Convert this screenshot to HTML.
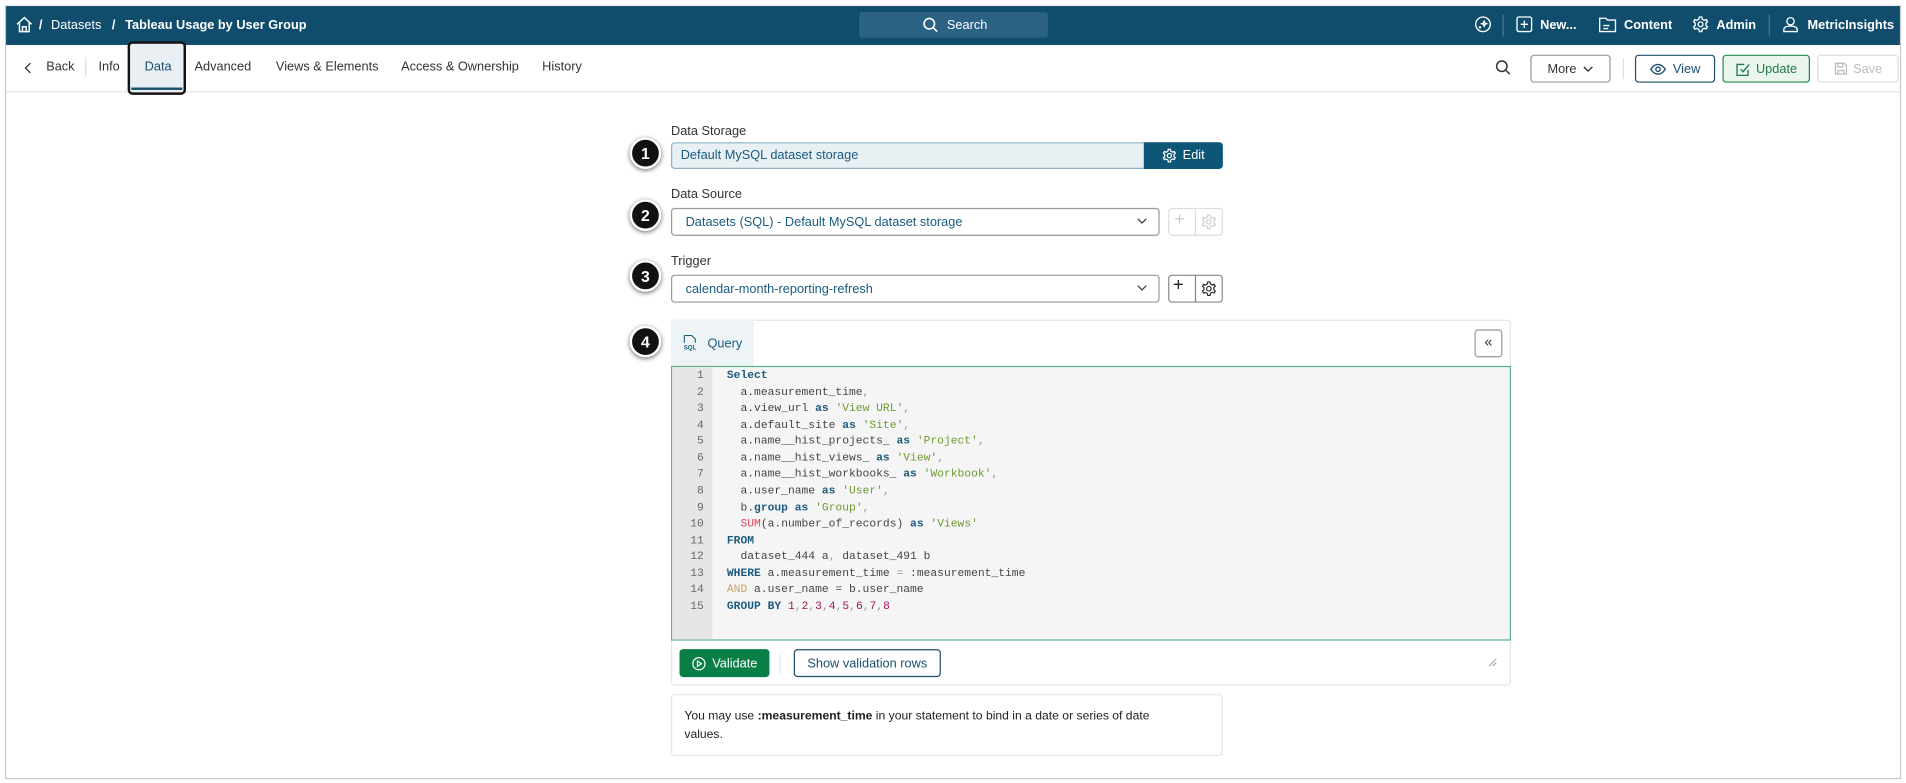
<!DOCTYPE html>
<html><head><meta charset="utf-8">
<style>
*{box-sizing:border-box;margin:0;padding:0}
html,body{width:1906px;height:782px;overflow:hidden;background:#fff}
#w{position:absolute;left:0;top:0;width:1568px;height:644px;transform:scale(1.21556);transform-origin:0 0;font-family:"Liberation Sans",sans-serif;color:#222}
.a{position:absolute}
.frame{left:4px;top:4px;width:1560px;height:637px;border:1px solid #c8c8c8;border-top-color:#e4e4e4}
.bar{left:5px;top:5px;width:1558px;height:32px;background:#104d6d;color:#fff;font-size:10.5px;font-weight:bold}
.bar .a{top:10px;white-space:nowrap}
.tab{top:49px;font-size:10.5px;color:#333;white-space:nowrap}
.btn{border:1px solid #999;border-radius:3px;font-size:10.5px;display:flex;align-items:center;justify-content:center;gap:5px;background:#fff}
.lbl{font-size:10.5px;color:#333}
.inp{border:1px solid #999;border-radius:3px;font-size:10.5px;color:#1a5b80;padding-left:11px;display:flex;align-items:center;background:#fff}
.circ{width:26px;height:26px;border-radius:50%;background:#111;border:2px solid #fff;box-shadow:0 1px 4px rgba(0,0,0,.6);color:#fff;font-weight:bold;font-size:13px;display:flex;align-items:center;justify-content:center}
.code{font-family:"Liberation Mono","DejaVu Sans Mono",monospace;font-size:9.3px;line-height:13.57px;white-space:pre}
.k{color:#1d5a7d;font-weight:bold}.s{color:#6e9a33}.f{color:#e0445f}.n{color:#a3145c}.p{color:#999}
</style></head><body><div id="w">
<div class="a frame"></div>
<div class="a bar">
 <svg class="a" style="left:8px;top:8px" width="14" height="14" viewBox="0 0 14 14" fill="none" stroke="#fff" stroke-width="1.2"><path d="M1 7 7 1.5 13 7M3 5.5V13h8V5.5M5.5 13V9h3v4"/></svg>
 <span class="a" style="left:27px">/</span><span class="a" style="left:37px;font-weight:normal">Datasets</span>
 <span class="a" style="left:87px">/</span><span class="a" style="left:98px">Tableau Usage by User Group</span>
 <div class="a" style="left:702px;top:5px;width:155px;height:21px;background:#2b6283;border-radius:2px"></div>
 <svg class="a" style="left:754px;top:9px" width="13" height="13" viewBox="0 0 13 13" fill="none" stroke="#fff" stroke-width="1.3"><circle cx="5.5" cy="5.5" r="4.3"/><path d="M8.7 8.7 12 12"/></svg>
 <span class="a" style="left:774px;font-weight:normal">Search</span>
 <svg class="a" style="left:1208px;top:8px" width="14" height="14" viewBox="0 0 14 14" fill="none" stroke="#fff" stroke-width="1.1"><circle cx="7" cy="7" r="6"/><path d="M8 4.5l.6 1.4 1.4.6-1.4.6L8 8.5l-.6-1.4L6 6.5l1.4-.6zM4.5 8.5v2M3.5 9.5h2"/></svg>
 <div class="a" style="left:1231px;top:7px;width:1px;height:18px;background:#4a7a96"></div>
 <svg class="a" style="left:1242px;top:8px" width="14" height="14" viewBox="0 0 14 14" fill="none" stroke="#fff" stroke-width="1.1"><rect x="1" y="1" width="12" height="12" rx="1.5"/><path d="M7 4v6M4 7h6"/></svg>
 <span class="a" style="left:1262px">New...</span>
 <svg class="a" style="left:1310px;top:8px" width="15" height="14" viewBox="0 0 15 14" fill="none" stroke="#fff" stroke-width="1.1"><path d="M1 2h5l1.5 1.5H14V13H1z M4 8h5M4 10.5h4"/></svg>
 <span class="a" style="left:1331px">Content</span>
 <svg class="a" style="left:1387px;top:8px" width="14" height="14" viewBox="0 0 14 14" fill="none" stroke="#fff" stroke-width="1.1"><circle cx="7" cy="7" r="2"/><path d="M6 1h2l.4 1.8 1.6.9 1.7-.6 1 1.7-1.3 1.2v1.9l1.3 1.2-1 1.7-1.7-.6-1.6.9L8 13H6l-.4-1.8-1.6-.9-1.7.6-1-1.7L2.6 8V6L1.3 4.8l1-1.7 1.7.6 1.6-.9z"/></svg>
 <span class="a" style="left:1407px">Admin</span>
 <div class="a" style="left:1450px;top:7px;width:1px;height:18px;background:#4a7a96"></div>
 <svg class="a" style="left:1461px;top:8px" width="14" height="14" viewBox="0 0 14 14" fill="none" stroke="#fff" stroke-width="1.1"><circle cx="7" cy="4.5" r="3"/><path d="M1.5 13v-1.5c0-2 2-3 5.5-3s5.5 1 5.5 3V13z"/></svg>
 <span class="a" style="left:1482px">MetricInsights</span>
</div>
<div class="a" style="left:5px;top:75px;width:1558px;height:1px;background:#e3e3e3"></div>
<svg class="a" style="left:19px;top:51px" width="8" height="10" viewBox="0 0 8 10" fill="none" stroke="#333" stroke-width="1.1"><path d="M6 1 2 5l4 4"/></svg>
<span class="a tab" style="left:38px">Back</span>
<div class="a" style="left:70px;top:47px;width:1px;height:16px;background:#ddd"></div>
<span class="a tab" style="left:81px">Info</span>
<div class="a" style="left:105px;top:34px;width:48px;height:44px;border:2px solid #111;border-radius:4px;background:#e9eff3"></div>
<div class="a" style="left:108px;top:72px;width:42px;height:2px;background:#1a4f6e"></div>
<span class="a tab" style="left:119px;color:#1a4f6e">Data</span>
<span class="a tab" style="left:160px">Advanced</span>
<span class="a tab" style="left:227px">Views &amp; Elements</span>
<span class="a tab" style="left:330px">Access &amp; Ownership</span>
<span class="a tab" style="left:446px">History</span>
<svg class="a" style="left:1230px;top:49px" width="13" height="13" viewBox="0 0 13 13" fill="none" stroke="#333" stroke-width="1.2"><circle cx="5.5" cy="5.5" r="4.3"/><path d="M8.7 8.7 12 12"/></svg>
<div class="a btn" style="left:1259px;top:45px;width:66px;height:23px;color:#333">More <svg width="9" height="6" viewBox="0 0 9 6" fill="none" stroke="#333" stroke-width="1.1"><path d="M1 1l3.5 3.5L8 1"/></svg></div>
<div class="a" style="left:1335px;top:48px;width:1px;height:17px;background:#e0e0e0"></div>
<div class="a btn" style="left:1345px;top:45px;width:66px;height:23px;border-color:#1a4f6e;color:#1a4f6e"><svg width="14" height="10" viewBox="0 0 14 10" fill="none" stroke="#1a4f6e" stroke-width="1.1"><path d="M1 5c2-3 4-4 6-4s4 1 6 4c-2 3-4 4-6 4S3 8 1 5z"/><circle cx="7" cy="5" r="1.8"/></svg>View</div>
<div class="a btn" style="left:1417px;top:45px;width:72px;height:23px;border-color:#1f8a4f;background:#eaf5ee;color:#1f7a46"><svg width="12" height="12" viewBox="0 0 12 12" fill="none" stroke="#1f7a46" stroke-width="1.1"><path d="M10 6.5V11H1V2h6M4 6l2 2 5-6"/></svg>Update</div>
<div class="a btn" style="left:1495px;top:45px;width:67px;height:23px;border-color:#ddd;color:#bbb"><svg width="11" height="11" viewBox="0 0 11 11" fill="none" stroke="#bbb" stroke-width="1"><path d="M1 1h7l2 2v7H1zM3 1v3h4V1M3 10V7h5v3"/></svg>Save</div>
<span class="a lbl" style="left:552px;top:102px">Data Storage</span>
<div class="a inp" style="left:552px;top:117px;width:390px;height:22px;background:#e8f0f4;border-color:#8db0c4;border-radius:3px 0 0 3px;padding-left:7px">Default MySQL dataset storage</div>
<div class="a" style="left:941px;top:117px;width:65px;height:22px;background:#0e5675;border-radius:0 3px 3px 0;color:#fff;font-size:10.5px;display:flex;align-items:center;justify-content:center;gap:5px"><svg width="12" height="12" viewBox="0 0 14 14" fill="none" stroke="#fff" stroke-width="1.2"><circle cx="7" cy="7" r="2"/><path d="M6 1h2l.4 1.8 1.6.9 1.7-.6 1 1.7-1.3 1.2v1.9l1.3 1.2-1 1.7-1.7-.6-1.6.9L8 13H6l-.4-1.8-1.6-.9-1.7.6-1-1.7L2.6 8V6L1.3 4.8l1-1.7 1.7.6 1.6-.9z"/></svg>Edit</div>
<div class="a circ" style="left:518px;top:113px">1</div>
<span class="a lbl" style="left:552px;top:154px">Data Source</span>
<div class="a inp" style="left:552px;top:171px;width:402px;height:23px">Datasets (SQL) - Default MySQL dataset storage</div>
<svg class="a" style="left:935px;top:179px" width="9" height="6" viewBox="0 0 9 6" fill="none" stroke="#333" stroke-width="1"><path d="M1 1l3.5 3.5L8 1"/></svg>
<div class="a" style="left:961px;top:171px;width:45px;height:23px;border:1px solid #ddd;border-radius:3px"></div>
<div class="a" style="left:983px;top:171px;width:1px;height:23px;background:#ddd"></div>
<span class="a" style="left:966px;top:172px;font-size:15px;color:#ccc">+</span>
<svg class="a" style="left:988px;top:176px" width="13" height="13" viewBox="0 0 14 14" fill="none" stroke="#ccc" stroke-width="1"><circle cx="7" cy="7" r="2"/><path d="M6 1h2l.4 1.8 1.6.9 1.7-.6 1 1.7-1.3 1.2v1.9l1.3 1.2-1 1.7-1.7-.6-1.6.9L8 13H6l-.4-1.8-1.6-.9-1.7.6-1-1.7L2.6 8V6L1.3 4.8l1-1.7 1.7.6 1.6-.9z"/></svg>
<div class="a circ" style="left:518px;top:164px">2</div>
<span class="a lbl" style="left:552px;top:209px">Trigger</span>
<div class="a inp" style="left:552px;top:226px;width:402px;height:23px">calendar-month-reporting-refresh</div>
<svg class="a" style="left:935px;top:234px" width="9" height="6" viewBox="0 0 9 6" fill="none" stroke="#333" stroke-width="1"><path d="M1 1l3.5 3.5L8 1"/></svg>
<div class="a" style="left:961px;top:226px;width:45px;height:23px;border:1px solid #888;border-radius:3px"></div>
<div class="a" style="left:983px;top:226px;width:1px;height:23px;background:#888"></div>
<span class="a" style="left:965px;top:226px;font-size:15px;color:#222">+</span>
<svg class="a" style="left:988px;top:231px" width="13" height="13" viewBox="0 0 14 14" fill="none" stroke="#222" stroke-width="1"><circle cx="7" cy="7" r="2"/><path d="M6 1h2l.4 1.8 1.6.9 1.7-.6 1 1.7-1.3 1.2v1.9l1.3 1.2-1 1.7-1.7-.6-1.6.9L8 13H6l-.4-1.8-1.6-.9-1.7.6-1-1.7L2.6 8V6L1.3 4.8l1-1.7 1.7.6 1.6-.9z"/></svg>
<div class="a circ" style="left:518px;top:214px">3</div>
<div class="a" style="left:552px;top:263px;width:691px;height:301px;border:1px solid #e6e6e6;border-radius:3px"></div>
<div class="a" style="left:552px;top:263px;width:68px;height:38px;background:#eef3f6"></div>
<svg class="a" style="left:562px;top:275px" width="12" height="14" viewBox="0 0 12 14" fill="none" stroke="#1a5b80" stroke-width="0.9"><path d="M1 1h6l3 3v3M1 1v6"/><text x="0.5" y="12.5" font-size="5" fill="#1a5b80" stroke="none" font-family="Liberation Sans" font-weight="bold">SQL</text></svg>
<span class="a" style="left:582px;top:277px;font-size:10.5px;color:#1a5b80">Query</span>
<div class="a circ" style="left:518px;top:268px">4</div>
<div class="a" style="left:1213px;top:271px;width:23px;height:23px;border:1px solid #999;border-radius:3px;font-size:12px;text-align:center;line-height:19px;color:#333">«</div>
<div class="a" style="left:552px;top:301px;width:691px;height:226px;border:1px solid #5bb38a;background:#f5f5f5"></div>
<div class="a" style="left:553px;top:302px;width:33px;height:224px;background:#e6e6e6"></div>
<div class="a code" style="left:553px;top:302px;width:26px;text-align:right;color:#666">1
2
3
4
5
6
7
8
9
10
11
12
13
14
15</div>
<div class="a code" style="left:598px;top:302px;color:#444"><span class="k">Select</span>
  a.measurement_time<span class="p">,</span>
  a.view_url <span class="k">as</span> <span class="s">'View URL'</span><span class="p">,</span>
  a.default_site <span class="k">as</span> <span class="s">'Site'</span><span class="p">,</span>
  a.name__hist_projects_ <span class="k">as</span> <span class="s">'Project'</span><span class="p">,</span>
  a.name__hist_views_ <span class="k">as</span> <span class="s">'View'</span><span class="p">,</span>
  a.name__hist_workbooks_ <span class="k">as</span> <span class="s">'Workbook'</span><span class="p">,</span>
  a.user_name <span class="k">as</span> <span class="s">'User'</span><span class="p">,</span>
  b.<span class="k">group</span> <span class="k">as</span> <span class="s">'Group'</span><span class="p">,</span>
  <span class="f">SUM</span>(a.number_of_records) <span class="k">as</span> <span class="s">'Views'</span>
<span class="k">FROM</span>
  dataset_444 a<span class="p">,</span> dataset_491 b
<span class="k">WHERE</span> a.measurement_time <span class="p">=</span> :measurement_time
<span style="color:#c9a36b">AND</span> a.user_name = b.user_name
<span class="k">GROUP BY</span> <span class="n">1</span><span class="p">,</span><span class="n">2</span><span class="p">,</span><span class="n">3</span><span class="p">,</span><span class="n">4</span><span class="p">,</span><span class="n">5</span><span class="p">,</span><span class="n">6</span><span class="p">,</span><span class="n">7</span><span class="p">,</span><span class="n">8</span></div>
<div class="a" style="left:559px;top:534px;width:74px;height:23px;background:#0a7f45;border-radius:3px;color:#fff;font-size:10.5px;display:flex;align-items:center;justify-content:center;gap:5px"><svg width="12" height="12" viewBox="0 0 12 12" fill="none" stroke="#fff" stroke-width="1"><circle cx="6" cy="6" r="5"/><path d="M4.8 3.8v4.4L8 6z"/></svg>Validate</div>
<div class="a" style="left:641px;top:537px;width:1px;height:17px;background:#e6e6e6"></div>
<div class="a btn" style="left:653px;top:534px;width:121px;height:23px;border-color:#1a4f6e;color:#1a4f6e">Show validation rows</div>
<svg class="a" style="left:1224px;top:541px" width="8" height="8" viewBox="0 0 8 8" stroke="#999" stroke-width="0.8"><path d="M1 7 7 1M4 7l3-3"/></svg>
<div class="a" style="left:552px;top:571px;width:454px;height:51px;border:1px solid #e6e6e6;border-radius:3px"></div>
<div class="a" style="left:563px;top:583px;width:405px;font-size:10px;line-height:14.5px;color:#222">You may use <b>:measurement_time</b> in your statement to bind in a date or series of date values.</div>
</div></body></html>
